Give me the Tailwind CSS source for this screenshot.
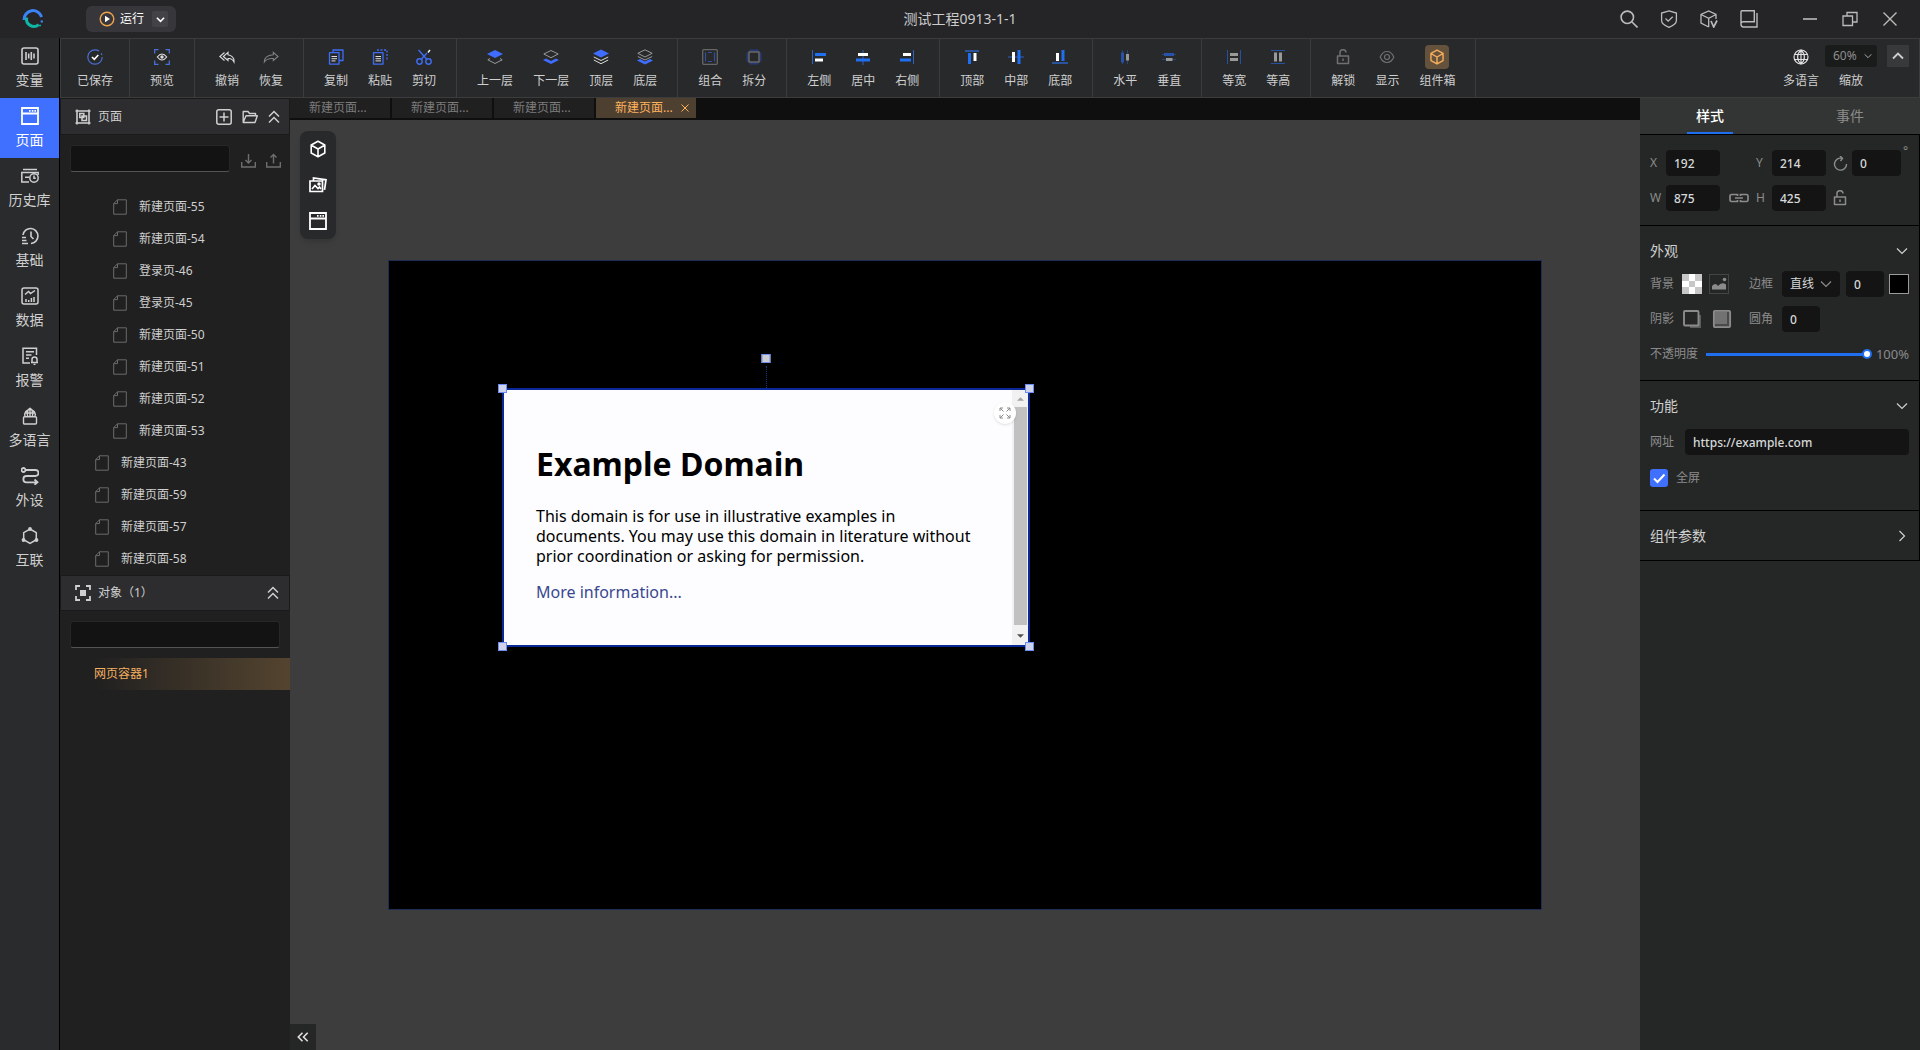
<!DOCTYPE html>
<html lang="zh-CN">
<head>
<meta charset="utf-8">
<meta name="viewport" content="width=device-width, initial-scale=1">
<title>测试工程0913-1-1</title>
<script src="https://cdn.jsdelivr.net/npm/@tailwindcss/browser@4"></script>
</head>
<body class="flex h-screen flex-col overflow-hidden bg-[#252528] font-['Noto_Sans','Noto_Sans_CJK_SC',sans-serif] text-[12px] leading-[18px] text-[#cfcfcf]">

<svg class="hidden" aria-hidden="true">
  <symbol id="file" viewBox="0 0 14 16"><path d="M4.5 .8h8.8v14.4H.7V4.6zM4.5 .8v3.8H.7" fill="none" stroke="currentColor"/></symbol>
  <symbol id="cube" viewBox="0 0 18 18"><path d="M9 1.2 15.8 5v8L9 16.8 2.2 13V5zM2.4 5.2 9 9l6.6-3.8M9 9v7.6" fill="none" stroke="currentColor" stroke-width="1.6" stroke-linejoin="round"/></symbol>
  <symbol id="window" viewBox="0 0 18 18"><path d="M1 1h16v16H1zM1 6.5h16" fill="none" stroke="currentColor" stroke-width="1.8"/><path d="M8 3.8h1.6M10.8 3.8h1.6M13.4 3.8H15" stroke="currentColor" stroke-width="1.8"/></symbol>
  <symbol id="down" viewBox="0 0 12 12"><path d="m1 3.5 5 5 5-5" fill="none" stroke="currentColor" stroke-width="1.2"/></symbol>
  <symbol id="dblup" viewBox="0 0 12 14"><path d="m1 6.5 5-5 5 5M1 12.5l5-5 5 5" fill="none" stroke="currentColor" stroke-width="1.5"/></symbol>
  <symbol id="lock" viewBox="0 0 14 16"><path d="M1.5 7h11v7.5h-11zM4 7V4a3 3 0 0 1 6-.5M7 9.5v2.5" fill="none" stroke="currentColor" stroke-width="1.5" stroke-linejoin="round"/></symbol>
</svg>

<header class="relative flex h-[38px] shrink-0 items-center">
  <svg class="ml-[22px] size-[22px]" viewBox="0 0 22 22" fill="none"><path d="M2 12A9 9 0 0 1 19.6 9" stroke="#3b82f6" stroke-width="3"/><path d="M4.7 9.5a7.4 7.4 0 0 0 12 7.2" stroke="#0fb5a5" stroke-width="3"/><circle cx="19.8" cy="13.5" r="1.2" fill="#3b82f6"/><circle cx="18" cy="17.4" r="1" fill="#0fb5a5"/></svg>
  <div class="ml-[42px] flex h-[26px] items-center rounded-md bg-[#37373b] pl-[13px] pr-2">
    <button class="flex items-center gap-[5px] text-white"><svg class="size-4" viewBox="0 0 16 16"><circle cx="8" cy="8" r="6.8" fill="none" stroke="#eda24e" stroke-width="1.4"/><path d="M6 4.8v6.4L11 8z" fill="#fff"/></svg>运行</button>
    <button class="ml-2 flex size-4 items-center justify-center rounded-[2px] bg-[#434347] text-white" aria-label="运行选项"><svg class="size-[9px]" viewBox="0 0 10 10"><path d="m1 3 4 4 4-4" fill="none" stroke="currentColor" stroke-width="1.8"/></svg></button>
  </div>
  <h1 class="absolute inset-x-0 mx-auto w-fit text-[14px] leading-5 text-[#cccccc]">测试工程0913-1-1</h1>
  <div class="ml-auto mr-[10px] flex items-center text-[#bbbbbb]">
    <button class="flex h-8 w-10 items-center justify-center" aria-label="搜索"><svg class="size-[18px]" viewBox="0 0 18 18" fill="none" stroke="currentColor" stroke-width="1.6"><circle cx="7.3" cy="7.3" r="6.2"/><path d="m12 12 5.5 5.5"/></svg></button>
    <button class="flex h-8 w-10 items-center justify-center" aria-label="安全"><svg class="size-[18px]" viewBox="0 0 18 18" fill="none" stroke="currentColor" stroke-width="1.3"><path d="M9 .9 16.4 3v7.5c0 3-4 5.5-7.4 6.8-3.4-1.3-7.4-3.8-7.4-6.8V3zM5.5 8.5l2.7 2.7 4.5-4.4"/></svg></button>
    <button class="flex h-8 w-10 items-center justify-center" aria-label="组件版本"><svg class="size-[18px]" viewBox="0 0 18 18" fill="none" stroke="currentColor" stroke-width="1.3"><path d="M16 9V4.5L8.7 1 1 4.5V13l7.7 4M1 4.5l7.7 3.8L16 4.5M8.700 8.300V17"/><path d="m11 11 2.700 6L17 10.500" stroke-width="1.700"/></svg></button>
    <button class="flex h-8 w-10 items-center justify-center" aria-label="文档"><svg class="size-[18px]" viewBox="0 0 18 18" fill="none" stroke="currentColor" stroke-width="1.4"><path d="M1 14.500V1.700q0-.9.900-.9h12.400v10.900H3.500Q1 11.700 1 14.300q0 2.700 2.500 2.700H17V3"/></svg></button>
    <button class="ml-[21px] flex h-8 w-10 items-center justify-center" aria-label="最小化"><svg class="size-4" viewBox="0 0 16 16"><path d="M1 8h14" stroke="currentColor" stroke-width="1.6"/></svg></button>
    <button class="flex h-8 w-10 items-center justify-center" aria-label="还原"><svg class="size-4" viewBox="0 0 16 16" fill="none" stroke="currentColor" stroke-width="1.3"><path d="M1 5h9.500v9.500H1zM5 5V1.500h10V11h-4.500"/></svg></button>
    <button class="flex h-8 w-10 items-center justify-center" aria-label="关闭"><svg class="size-4" viewBox="0 0 16 16" stroke="currentColor" stroke-width="1.4"><path d="m1.500 1.500 13 13M14.500 1.500l-13 13"/></svg></button>
  </div>
</header>

<div class="flex min-h-0 flex-1">
  <nav class="w-[60px] shrink-0 border-r border-black bg-[#2a2b2d] text-[14px] leading-5">
    <a href="#" class="flex h-[60px] flex-col items-center gap-[5px] pt-[9px]"><svg class="size-[18px]" viewBox="0 0 18 18" fill="none" stroke="currentColor" stroke-width="1.6"><rect x="1" y="1" width="16" height="16" rx="2"/><path d="M5 5v8M7.700 6.500v5M10.300 5v8M13 6.500v5"/></svg>变量</a>
    <a href="#" class="flex h-[60px] flex-col items-center gap-[5px] bg-[#4070ff] pt-[9px] text-white"><svg class="size-[18px]"><use href="#window"/></svg>页面</a>
    <a href="#" class="flex h-[60px] flex-col items-center gap-[5px] pt-[9px]"><svg class="size-[18px]" viewBox="0 0 18 18" fill="none" stroke="currentColor" stroke-width="1.5"><path d="M2 2.500h14M8 15H.8V5.500h16.400V8M4 10.300h4"/><circle cx="13" cy="11" r="4.200"/><path d="M13 8.500v2.800h1.800"/></svg>历史库</a>
    <a href="#" class="flex h-[60px] flex-col items-center gap-[5px] pt-[9px]"><svg class="size-[18px]" viewBox="0 0 18 18" fill="none" stroke="currentColor" stroke-width="1.6"><path d="M2 8A7.500 7.500 0 1 1 10 16.500M10 4.500v5l2.500 2.500M1 10.500h4M1 13.500h4.500M1 16.500h6"/></svg>基础</a>
    <a href="#" class="flex h-[60px] flex-col items-center gap-[5px] pt-[9px]"><svg class="size-[18px]" viewBox="0 0 18 18" fill="none" stroke="currentColor" stroke-width="1.5"><rect x="1" y="1" width="16" height="16" rx="2"/><path d="m4 7.500 3.500-3 2 2L14 3.500M5 15v-3M7.700 15v-2M10.400 15v-4M13 15v-5"/></svg>数据</a>
    <a href="#" class="flex h-[60px] flex-col items-center gap-[5px] pt-[9px]"><svg class="size-[18px]" viewBox="0 0 18 18" fill="none" stroke="currentColor" stroke-width="1.5"><path d="M9 16H2V1.200h13.500V8M5 4.800h8M5 8h5.500M5 11.200h3"/><path d="M11 15.500v-3a2.500 2.500 0 0 1 5 0v3zM10 15.600h7M12.500 17.400h2"/></svg>报警</a>
    <a href="#" class="flex h-[60px] flex-col items-center gap-[5px] pt-[9px]"><svg class="size-[18px]" viewBox="0 0 18 18" fill="none" stroke="currentColor" stroke-width="1.4"><path d="M4 9.500a5.300 5.300 0 1 1 10 0M9 1c-3 2.500-3 6-2.300 8.500M9 1c3 2.500 3 6 2.300 8.500M9 1v8.500M4 6h10"/><rect x="2.500" y="9.800" width="13" height="7.200" rx="1"/></svg>多语言</a>
    <a href="#" class="flex h-[60px] flex-col items-center gap-[5px] pt-[9px]"><svg class="size-[18px]" viewBox="0 0 18 18" fill="none" stroke="currentColor" stroke-width="1.8"><circle cx="2.500" cy="3" r="2"/><path d="M4.500 3h10a3 3 0 0 1 0 6h-9a3 3 0 0 0 0 6.300H16M13.500 12.500l3 2.800-3 2.500"/></svg>外设</a>
    <a href="#" class="flex h-[60px] flex-col items-center gap-[5px] pt-[9px]"><svg class="size-[18px]" viewBox="0 0 18 18" fill="none" stroke="currentColor" stroke-width="1.5"><path d="m9 2 6.300 3.700v7L9 16.300l-6.300-3.600v-7z"/><g fill="currentColor" stroke="none"><circle cx="9" cy="2" r="1.900"/><circle cx="2.500" cy="13" r="1.900"/><circle cx="15.500" cy="13" r="1.900"/></g></svg>互联</a>
  </nav>

  <div class="flex min-w-0 flex-1 flex-col">
    <div class="flex h-[60px] shrink-0 border border-[#3c3c3c] bg-[#28292b]" role="toolbar">
      <div class="flex border-r border-[#3c3c3c] px-[6px]">
        <button class="flex flex-col items-center gap-[3px] px-[10px] pt-[6px]"><span class="flex h-6 items-center"><svg class="size-4" viewBox="0 0 16 16" fill="none"><circle cx="8" cy="8" r="7.200" stroke="#4a70d8" stroke-width="1.200" stroke-dasharray="38 3 2 2"/><path d="m5 8 2.300 2.300L11.300 6" stroke="#fff" stroke-width="1.600"/></svg></span>已保存</button>
      </div>
      <div class="flex border-r border-[#3c3c3c] px-[10px]">
        <button class="flex flex-col items-center gap-[3px] px-[10px] pt-[6px]"><span class="flex h-6 items-center"><svg class="size-4" viewBox="0 0 16 16" fill="none"><path d="M.7 4.500V.7h3.800M11.500.7h3.800v3.800M15.300 11.500v3.800h-3.800M4.500 15.300H.7v-3.800" stroke="#4a70d8" stroke-width="1.300"/><path d="M3.300 8q4.700-6 9.400 0-4.700 6-9.400 0z" stroke="#ddd" stroke-width="1.200"/><circle cx="8" cy="8" r="1.700" fill="#ddd"/></svg></span>预览</button>
      </div>
      <div class="flex border-r border-[#3c3c3c] px-[10px]">
        <button class="flex flex-col items-center gap-[3px] px-[10px] pt-[6px]"><span class="flex h-6 items-center"><svg class="size-4" viewBox="0 0 16 16" fill="none" stroke="#ddd" stroke-width="1.100"><path d="M5.500 3.500.8 7.500l4.700 4M9 3.300 4.300 7.500 9 11.500V9.500q4-.5 6 3.500.5-6-6-7.300z"/></svg></span>撤销</button>
        <button class="flex flex-col items-center gap-[3px] px-[10px] pt-[6px]"><span class="flex h-6 items-center"><svg class="size-4" viewBox="0 0 16 16" fill="none" stroke="#808080" stroke-width="1.100"><path d="m10.300 3.300 4.700 4.200-4.700 4V9.500Q4 9 1.300 13 1 6.500 10.300 5.700z"/></svg></span>恢复</button>
      </div>
      <div class="flex border-r border-[#3c3c3c] px-[10px]">
        <button class="flex flex-col items-center gap-[3px] px-[10px] pt-[6px]"><span class="flex h-6 items-center"><svg class="size-4" viewBox="0 0 16 16" fill="none"><path d="M5 3.500V1h10v10.500h-3.500M1.500 3.700H11v11.500H1.500z" stroke="#3e6df5" stroke-width="1.300" stroke-linejoin="round"/><path d="M3.500 7.500H9M3.500 9.700H9M3.500 11.900h4" stroke="#ddd"/></svg></span>复制</button>
        <button class="flex flex-col items-center gap-[3px] px-[10px] pt-[6px]"><span class="flex h-6 items-center"><svg class="size-4" viewBox="0 0 16 16" fill="none"><path d="M5 1h10v10" stroke="#3e6df5" stroke-width="1.300" stroke-dasharray="2 1.500"/><path d="M1.500 3.700H11v11.500H1.500z" stroke="#3e6df5" stroke-width="1.300" stroke-linejoin="round"/><path d="M3.500 7.500H9M3.500 9.700H9M3.500 11.900H9" stroke="#ddd"/></svg></span>粘贴</button>
        <button class="flex flex-col items-center gap-[3px] px-[10px] pt-[6px]"><span class="flex h-6 items-center"><svg class="size-4" viewBox="0 0 16 16" fill="none" stroke="#3e6df5" stroke-width="1.400"><circle cx="3.500" cy="12.500" r="2.700"/><circle cx="12.500" cy="12.500" r="2.700"/><path d="m2.500 1 8.500 9.500M5 10.500 11 4"/><path d="m12 3.500 2-2.500" stroke="#fff"/></svg></span>剪切</button>
      </div>
      <div class="flex border-r border-[#3c3c3c] px-[10px]">
        <button class="flex flex-col items-center gap-[3px] px-[10px] pt-[6px]"><span class="flex h-6 items-center"><svg class="size-4" viewBox="0 0 16 16" fill="none"><path d="m3 9.500-2.200 1.300L8 14.500l7.200-3.700L13 9.500" stroke="#999"/><path d="m0 5 8-4 8 4-8 4z" fill="#3e6dff"/></svg></span>上一层</button>
        <button class="flex flex-col items-center gap-[3px] px-[10px] pt-[6px]"><span class="flex h-6 items-center"><svg class="size-4" viewBox="0 0 16 16" fill="none"><path d="m0 11 3-1.500L8 12l5-2.500 3 1.500-8 4z" fill="#3e6dff"/><path d="M.8 5 8 1.500 15.200 5 8 8.700z" stroke="#999"/></svg></span>下一层</button>
        <button class="flex flex-col items-center gap-[3px] px-[10px] pt-[6px]"><span class="flex h-6 items-center"><svg class="size-4" viewBox="0 0 16 16" fill="none"><path d="m.8 8 7.200 3.500L15.200 8M.8 11 8 14.700l7.200-3.700" stroke="#ddd"/><path d="m0 4.500 8-4 8 4-8 4z" fill="#3e6dff"/></svg></span>顶层</button>
        <button class="flex flex-col items-center gap-[3px] px-[10px] pt-[6px]"><span class="flex h-6 items-center"><svg class="size-4" viewBox="0 0 16 16" fill="none"><path d="m0 11.500 3-1.500 5 2.500 5-2.500 3 1.500-8 4z" fill="#3e6dff"/><path d="M.8 4.300 8 .8l7.200 3.500L8 8zM.8 7.500 8 11l7.200-3.500" stroke="#999"/></svg></span>底层</button>
      </div>
      <div class="flex border-r border-[#3c3c3c] px-[10px]">
        <button class="flex flex-col items-center gap-[3px] px-[10px] pt-[6px]"><span class="flex h-6 items-center"><svg class="size-4" viewBox="0 0 16 16" fill="none"><rect x=".7" y=".7" width="14.600" height="14.600" rx="1" stroke="#666" stroke-width="1.300"/><path d="M6 3.500h4M6 12.500h4M3.500 3.500v9M12.500 3.500v9" stroke="#31509f" stroke-width="1.200"/></svg></span>组合</button>
        <button class="flex flex-col items-center gap-[3px] px-[10px] pt-[6px]"><span class="flex h-6 items-center"><svg class="size-4" viewBox="0 0 16 16" fill="none"><path d="M3.500 1.500h9M3.500 14.500h9M1.500 3.500v9M14.500 3.500v9" stroke="#263a78" stroke-width="2"/><rect x="3" y="3" width="10" height="10" stroke="#777" stroke-width="1.200"/></svg></span>拆分</button>
      </div>
      <div class="flex border-r border-[#3c3c3c] px-[10px]">
        <button class="flex flex-col items-center gap-[3px] px-[10px] pt-[6px]"><span class="flex h-6 items-center"><svg class="size-4" viewBox="0 0 16 16"><path d="M1.500 1v14" stroke="#2b62c4"/><path d="M4 5.500h11" stroke="#1f6ff0" stroke-width="3"/><path d="M4 11h8" stroke="#fff" stroke-width="3"/></svg></span>左侧</button>
        <button class="flex flex-col items-center gap-[3px] px-[10px] pt-[6px]"><span class="flex h-6 items-center"><svg class="size-4" viewBox="0 0 16 16"><path d="M8 1v15" stroke="#2b62c4"/><path d="M3 5.500h10" stroke="#fff" stroke-width="3"/><path d="M1 11h14" stroke="#1f6ff0" stroke-width="3"/></svg></span>居中</button>
        <button class="flex flex-col items-center gap-[3px] px-[10px] pt-[6px]"><span class="flex h-6 items-center"><svg class="size-4" viewBox="0 0 16 16"><path d="M14.500 1v14" stroke="#2b62c4"/><path d="M4 5.500h8" stroke="#fff" stroke-width="3"/><path d="M1 11h11" stroke="#1f6ff0" stroke-width="3"/></svg></span>右侧</button>
      </div>
      <div class="flex border-r border-[#3c3c3c] px-[10px]">
        <button class="flex flex-col items-center gap-[3px] px-[10px] pt-[6px]"><span class="flex h-6 items-center"><svg class="size-4" viewBox="0 0 16 16"><path d="M1 2h14" stroke="#2b62c4" stroke-width="1.500"/><path d="M5.500 4v11" stroke="#1f6ff0" stroke-width="3"/><path d="M11 4v8" stroke="#fff" stroke-width="3"/></svg></span>顶部</button>
        <button class="flex flex-col items-center gap-[3px] px-[10px] pt-[6px]"><span class="flex h-6 items-center"><svg class="size-4" viewBox="0 0 16 16"><path d="M0 8h16" stroke="#2b62c4"/><path d="M5.500 3v10" stroke="#fff" stroke-width="3"/><path d="M11 1v14" stroke="#1f6ff0" stroke-width="3"/></svg></span>中部</button>
        <button class="flex flex-col items-center gap-[3px] px-[10px] pt-[6px]"><span class="flex h-6 items-center"><svg class="size-4" viewBox="0 0 16 16"><path d="M0 14h16" stroke="#2b62c4" stroke-width="1.500"/><path d="M5.500 4v8" stroke="#fff" stroke-width="3"/><path d="M11 1v11" stroke="#1f6ff0" stroke-width="3"/></svg></span>底部</button>
      </div>
      <div class="flex border-r border-[#3c3c3c] px-[10px]">
        <button class="flex flex-col items-center gap-[3px] px-[10px] pt-[6px]"><span class="flex h-6 items-center"><svg class="size-4" viewBox="0 0 16 16"><path d="M5.500 1v14M10.500 1v14" stroke="#2b4477"/><path d="M5.500 3.500v10" stroke="#2653a8" stroke-width="3"/><path d="M10.500 5v6.500" stroke="#999" stroke-width="3"/></svg></span>水平</button>
        <button class="flex flex-col items-center gap-[3px] px-[10px] pt-[6px]"><span class="flex h-6 items-center"><svg class="size-4" viewBox="0 0 16 16"><path d="M1 5.500h14M1 10.500h14" stroke="#2b4477"/><path d="M3 5.500h10" stroke="#2653a8" stroke-width="3"/><path d="M5 10.500h6.500" stroke="#999" stroke-width="3"/></svg></span>垂直</button>
      </div>
      <div class="flex border-r border-[#3c3c3c] px-[10px]">
        <button class="flex flex-col items-center gap-[3px] px-[10px] pt-[6px]"><span class="flex h-6 items-center"><svg class="size-4" viewBox="0 0 16 16"><path d="M1.500 1v14M14.500 1v14" stroke="#24509f"/><path d="M4 5.500h8M4 10.500h8" stroke="#999" stroke-width="3"/></svg></span>等宽</button>
        <button class="flex flex-col items-center gap-[3px] px-[10px] pt-[6px]"><span class="flex h-6 items-center"><svg class="size-4" viewBox="0 0 16 16"><path d="M1 1.500h14M1 14.500h14" stroke="#24509f"/><path d="M5.500 3.500v9M10.500 3.500v9" stroke="#999" stroke-width="3"/></svg></span>等高</button>
      </div>
      <div class="flex border-r border-[#3c3c3c] px-[10px]">
        <button class="flex flex-col items-center gap-[3px] px-[10px] pt-[6px]"><span class="flex h-6 items-center text-[#707070]"><svg class="h-4 w-[14px]"><use href="#lock"/></svg></span>解锁</button>
        <button class="flex flex-col items-center gap-[3px] px-[10px] pt-[6px]"><span class="flex h-6 items-center"><svg class="size-4" viewBox="0 0 16 16" fill="none" stroke="#707070" stroke-width="1.200"><path d="M1.200 8Q3.500 2.500 8 2.500T14.800 8Q12.500 13.500 8 13.500T1.200 8z"/><circle cx="8" cy="8" r="2.500"/></svg></span>显示</button>
        <button class="flex flex-col items-center gap-[3px] px-[10px] pt-[6px]"><span class="flex size-6 items-center justify-center rounded bg-[#65523c] text-[#f5ad5c]"><svg class="size-4"><use href="#cube"/></svg></span>组件箱</button>
      </div>
      <div class="ml-auto flex items-start pr-[10px] pt-[6px]">
        <button class="flex flex-col items-center gap-[3px]"><span class="flex h-6 items-center"><svg class="size-4" viewBox="0 0 16 16" fill="none" stroke="#e0e0e0" stroke-width="1.200"><circle cx="8" cy="8" r="7"/><path d="M8 1v14M1.700 5.500h12.600M1.700 10.500h12.600M8 1c-4.500 4-4.500 10 0 14M8 1c4.500 4 4.500 10 0 14"/></svg></span>多语言</button>
        <div class="ml-[6px] flex flex-col items-center gap-[5px]">
          <div class="relative flex w-[52px] items-center"><select id="zoom" class="h-[22px] w-full appearance-none rounded-[3px] bg-[#1a1b1b] pl-2 text-[12px] text-[#8e8e8e]"><option>60%</option></select><svg class="pointer-events-none absolute right-[5px] size-2"><use href="#down"/></svg></div>
          <label for="zoom">缩放</label>
        </div>
        <button class="ml-[10px] flex size-[22px] items-center justify-center bg-[#38393a]" aria-label="收起"><svg class="size-3" viewBox="0 0 12 12"><path d="m1 8.500 5-5 5 5" fill="none" stroke="currentColor" stroke-width="1.800"/></svg></button>
      </div>
    </div>

    <div class="flex min-h-0 flex-1">
      <aside class="w-[230px] shrink-0 bg-[#202020]">
        <div class="flex h-[37px] items-center border border-[#1a1a1a] bg-[#2d2d2f] pl-[14px] pr-[9px]">
          <svg class="size-4" viewBox="0 0 16 16" fill="none" stroke="currentColor"><path d="M2 .5v15M14 .5v15M.5 2h15M.5 14h15" stroke-width="1.600"/><path d="M4.800 4.500h4v4h-4zM7 7h4.500v4.500H7z" stroke-width="1.500"/></svg>
          <h2 class="ml-[7px]">页面</h2>
          <button class="ml-auto" aria-label="新建页面"><svg class="size-4" viewBox="0 0 16 16" fill="none" stroke="currentColor" stroke-width="1.500"><rect x=".8" y=".8" width="14.400" height="14.400" rx="2"/><path d="M8 3.500v9M3.500 8h9"/></svg></button>
          <button class="ml-[10px]" aria-label="新建文件夹"><svg class="size-4" viewBox="0 0 16 16" fill="none" stroke="currentColor" stroke-width="1.400" stroke-linejoin="round"><path d="M1.200 13.500V2.500h4.800l1.500 2h6v2.300M1.200 13.500 4 6.800h11.300l-2.300 6.700z"/></svg></button>
          <button class="ml-[10px]" aria-label="全部折叠"><svg class="h-[14px] w-3"><use href="#dblup"/></svg></button>
        </div>
        <div class="flex h-14 items-start pl-[10px] pt-[10px]">
          <input type="text" aria-label="搜索页面" class="h-[27px] w-[160px] rounded-[3px] border border-[#272727] border-b-[#545454] bg-[#131313] px-2 outline-none">
          <button class="ml-[11px] mt-2 text-[#6e6e6e]" aria-label="导入"><svg class="size-[15px]" viewBox="0 0 15 15" fill="none" stroke="currentColor" stroke-width="1.400"><path d="M.7 9v5h13.600V9M7.500 1v9M4.500 7l3 3 3-3"/></svg></button>
          <button class="ml-[10px] mt-2 text-[#6e6e6e]" aria-label="导出"><svg class="size-[15px]" viewBox="0 0 15 15" fill="none" stroke="currentColor" stroke-width="1.400"><path d="M.7 9v5h13.600V9M7.500 10.500V1.500M4.500 4.500l3-3 3 3"/></svg></button>
        </div>
        <ul class="[&_a]:flex [&_a]:h-8 [&_a]:items-center [&_a]:gap-3 [&_svg]:h-4 [&_svg]:w-[14px] [&_svg]:text-[#6a6a6a]">
          <li><a href="#" class="pl-[53px]"><svg><use href="#file"/></svg>新建页面-55</a></li>
          <li><a href="#" class="pl-[53px]"><svg><use href="#file"/></svg>新建页面-54</a></li>
          <li><a href="#" class="pl-[53px]"><svg><use href="#file"/></svg>登录页-46</a></li>
          <li><a href="#" class="pl-[53px]"><svg><use href="#file"/></svg>登录页-45</a></li>
          <li><a href="#" class="pl-[53px]"><svg><use href="#file"/></svg>新建页面-50</a></li>
          <li><a href="#" class="pl-[53px]"><svg><use href="#file"/></svg>新建页面-51</a></li>
          <li><a href="#" class="pl-[53px]"><svg><use href="#file"/></svg>新建页面-52</a></li>
          <li><a href="#" class="pl-[53px]"><svg><use href="#file"/></svg>新建页面-53</a></li>
          <li><a href="#" class="pl-[35px]"><svg><use href="#file"/></svg>新建页面-43</a></li>
          <li><a href="#" class="pl-[35px]"><svg><use href="#file"/></svg>新建页面-59</a></li>
          <li><a href="#" class="pl-[35px]"><svg><use href="#file"/></svg>新建页面-57</a></li>
          <li><a href="#" class="pl-[35px]"><svg><use href="#file"/></svg>新建页面-58</a></li>
        </ul>
        <div class="flex h-9 items-center border border-[#1a1a1a] bg-[#2d2d2f] pl-[14px] pr-[10px]">
          <svg class="size-4" viewBox="0 0 16 16" fill="none" stroke="currentColor" stroke-width="1.800"><path d="M1 5V1h4M11 1h4v4M15 11v4h-4M5 15H1v-4"/><path d="M5 5h6v6H5z" fill="currentColor" stroke="none"/></svg>
          <h2 class="ml-[7px]">对象（1）</h2>
          <button class="ml-auto" aria-label="折叠对象"><svg class="h-[14px] w-3"><use href="#dblup"/></svg></button>
        </div>
        <div class="p-[10px]"><input type="text" aria-label="搜索对象" class="block h-[27px] w-full rounded-[3px] border border-[#272727] border-b-[#545454] bg-[#131313] px-2 outline-none"></div>
        <a href="#" class="flex h-8 items-center bg-linear-to-r from-transparent from-15% to-[#54442f] pl-[34px] text-[#f5b060]">网页容器1</a>
      </aside>

      <main class="flex min-w-0 flex-1 flex-col">
        <div class="flex h-[22px] shrink-0 items-start gap-[2px] bg-[#0f0f0f] text-[#7c7c7c]">
          <button class="h-5 w-[100px] bg-[#202020] pl-[19px] text-left">新建页面...</button>
          <button class="h-5 w-[100px] bg-[#202020] pl-[19px] text-left">新建页面...</button>
          <button class="h-5 w-[100px] bg-[#202020] pl-[19px] text-left">新建页面...</button>
          <button class="flex h-5 w-[100px] items-center gap-2 bg-[#4d4031] pl-[19px] text-left text-[#ffb25c]"><span>新建页面...</span><svg class="size-2" viewBox="0 0 8 8" stroke="currentColor"><path d="m.5.5 7 7M7.500.5l-7 7"/></svg></button>
        </div>
        <div class="relative min-h-0 flex-1 overflow-hidden bg-[#3d3d3d]">
          <div class="absolute left-[10px] top-[11px] flex w-9 flex-col items-center gap-[18px] rounded-lg bg-[#28292b] py-[9px] text-white shadow-md">
            <button aria-label="组件"><svg class="size-[18px]"><use href="#cube"/></svg></button>
            <button aria-label="图库"><svg class="size-[18px]" viewBox="0 0 18 18" fill="none" stroke="currentColor" stroke-width="1.700"><path d="M1 5h12.500v10.500H1zM4.500 4.500V2L17 3.800l-1.500 10"/><path d="m3 13 3-3.500 3 3 1.500-1.500 1.500 2"/><circle cx="10" cy="8" r=".9"/></svg></button>
            <button aria-label="窗口"><svg class="size-[18px]"><use href="#window"/></svg></button>
          </div>

          <div class="absolute left-[98px] top-[140px] h-[650px] w-[1154px] border border-[#1f2d55] bg-black">
            <div class="absolute left-[113px] top-[127px] h-[259px] w-[528px] border-2 border-[#0a2896] bg-[#fdfdff]">
              <div class="absolute -top-6 left-1/2 h-[22px] border-l border-dotted border-[#1d3580]"></div>
              <div class="absolute -top-[36px] left-1/2 size-[9px] -translate-x-1/2 border border-[#6c8df5] bg-[#cdcdd0]"></div>
              <div class="flex h-full font-['Noto_Sans',sans-serif] text-black">
                <article class="min-w-0 flex-1 pl-8 pr-3 pt-[54px] text-[16px] leading-5">
                  <h2 class="text-[32px] font-bold leading-[40px]">Example Domain</h2>
                  <p class="mt-[22px]">This domain is for use in illustrative examples in<br>documents. You may use this domain in literature without<br>prior coordination or asking for permission.</p>
                  <a href="https://example.com" class="mt-4 inline-block text-[#38488f]">More information...</a>
                </article>
                <div class="flex w-4 flex-col items-center justify-between bg-[#f1f1f1] py-[7px]">
                  <svg class="h-1 w-[7px]" viewBox="0 0 8 4"><path d="m0 4 4-4 4 4z" fill="#a3a3a3"/></svg>
                  <div class="mb-[9px] mt-[6px] w-[13px] flex-1 bg-[#c1c1c1]"></div>
                  <svg class="h-1 w-[7px]" viewBox="0 0 8 4"><path d="m0 0 4 4 4-4z" fill="#505050"/></svg>
                </div>
              </div>
              <button class="absolute right-3 top-[12px] flex size-[22px] items-center justify-center rounded-full bg-white shadow" aria-label="全屏"><svg class="size-3" viewBox="0 0 12 12" fill="none" stroke="#8c8c8c"><path d="M1 4V1h3M8 1h3v3M11 8v3H8M4 11H1V8M1 1l3.500 3.500M11 1 7.500 4.500M11 11 7.500 7.500M1 11l3.500-3.500"/></svg></button>
              <div class="absolute -left-[6px] -top-[6px] size-[9px] border border-[#6c8df5] bg-[#cfd4ea]"></div>
              <div class="absolute -right-[6px] -top-[6px] size-[9px] border border-[#6c8df5] bg-[#cfd4ea]"></div>
              <div class="absolute -bottom-[6px] -left-[6px] size-[9px] border border-[#6c8df5] bg-[#cfd4ea]"></div>
              <div class="absolute -bottom-[6px] -right-[6px] size-[9px] border border-[#6c8df5] bg-[#cfd4ea]"></div>
            </div>
          </div>

          <button class="absolute bottom-0 left-0 flex size-[26px] items-center justify-center bg-[#252727] text-[#e0e0e0]" aria-label="收起面板"><svg class="h-[10px] w-3" viewBox="0 0 12 10"><path d="M5.500.8 1.300 5l4.200 4.200M10.700.8 6.500 5l4.200 4.200" fill="none" stroke="currentColor" stroke-width="1.600"/></svg></button>
        </div>
      </main>

      <aside class="w-[280px] shrink-0 bg-[#252727] text-[#8b8b8b]">
        <div class="grid h-9 grid-cols-2 bg-[#333534] text-[14px]" role="tablist">
          <button role="tab" aria-selected="true" class="flex justify-center font-medium text-white"><span class="h-9 border-b-2 border-[#1f6ff0] px-[9px] leading-9">样式</span></button>
          <button role="tab" aria-selected="false">事件</button>
        </div>
        <div class="border-r border-black [&_input]:font-medium">
          <section class="border-y border-black pb-[14px] pl-[10px] pt-[15px]">
            <div class="flex h-[26px] items-center">
              <label for="px" class="w-4">X</label><input id="px" value="192" class="h-[26px] w-[54px] rounded bg-[#141414] px-2 text-[#d5d9d9] outline-none">
              <label for="py" class="ml-9 w-4">Y</label><input id="py" value="214" class="h-[26px] w-[54px] rounded bg-[#141414] px-2 text-[#d5d9d9] outline-none">
              <svg class="ml-[7px] size-[15px]" viewBox="0 0 15 15" fill="none" stroke="currentColor" stroke-width="1.400"><path d="M13.500 8A6 6 0 1 1 9 2.300M7 0l2.500 2.300L7.500 5"/></svg>
              <input aria-label="旋转角度" value="0" class="ml-1 h-[26px] w-[49px] rounded bg-[#141414] px-2 text-[#d5d9d9] outline-none"><span class="-mt-2 ml-[2px] self-start">°</span>
            </div>
            <div class="mt-[9px] flex h-[26px] items-center">
              <label for="pw" class="w-4">W</label><input id="pw" value="875" class="h-[26px] w-[54px] rounded bg-[#141414] px-2 text-[#d5d9d9] outline-none">
              <svg class="ml-[9px] h-[10px] w-5" viewBox="0 0 20 10" fill="none" stroke="currentColor" stroke-width="1.700"><path d="M8.500 3V1.500h-6Q1 1.500 1 3v4q0 1.500 1.500 1.500h6V7M11.500 3V1.500h6Q19 1.500 19 3v4q0 1.500-1.500 1.500h-6V7M6 5h8"/></svg>
              <label for="ph" class="ml-[7px] w-4">H</label><input id="ph" value="425" class="h-[26px] w-[54px] rounded bg-[#141414] px-2 text-[#d5d9d9] outline-none">
              <svg class="ml-[7px] h-4 w-[14px]"><use href="#lock"/></svg>
            </div>
          </section>

          <section class="border-b border-black px-[10px] pb-4 pt-[15px]">
            <div class="flex h-5 items-center justify-between text-[14px] text-[#cfcfcf]"><h3>外观</h3><svg class="mr-[1px] size-3"><use href="#down"/></svg></div>
            <div class="mt-[10px] flex h-[26px] items-center">
              <span class="w-8">背景</span>
              <svg class="size-5" viewBox="0 0 20 20"><rect width="20" height="20" fill="#fff"/><path d="M0 0h7v7H0zM13 0h7v7h-7zM7 7h6v6H7zM0 13h7v7H0zM13 13h7v7h-7z" fill="#c8c8c8"/></svg>
              <svg class="ml-[7px] size-5" viewBox="0 0 20 20"><rect x=".5" y=".5" width="19" height="19" fill="none" stroke="#444"/><path d="M3 15.500V12q3.500-4 6 0 3.500-4.500 8-1.500v5z" fill="currentColor"/><circle cx="15.500" cy="5.500" r="1.800" fill="currentColor"/></svg>
              <label for="bs" class="ml-5 w-[33px]">边框</label>
              <div class="relative flex w-[58px] items-center"><select id="bs" class="h-[26px] w-full appearance-none rounded bg-[#141414] pl-2 text-[12px] text-[#d5d9d9]"><option>直线</option></select><svg class="pointer-events-none absolute right-2 size-3"><use href="#down"/></svg></div>
              <input aria-label="边框宽度" value="0" class="ml-[6px] h-[26px] w-[38px] rounded bg-[#141414] px-2 text-[#d5d9d9] outline-none">
              <button aria-label="边框颜色" class="ml-[5px] size-5 border border-[#9a9a9a] bg-black"></button>
            </div>
            <div class="mt-[9px] flex h-[26px] items-center">
              <span class="w-8">阴影</span>
              <svg class="size-5" viewBox="0 0 20 20" fill="none"><path d="M8 18h10V6" stroke="#5c5c5c" stroke-width="2"/><rect x="2" y="2" width="14.500" height="14.500" rx="1" stroke="currentColor" stroke-width="1.900"/></svg>
              <svg class="ml-[10px] size-5" viewBox="0 0 20 20" fill="none"><rect x="1.900" y="1.900" width="16.200" height="16.200" rx="1" fill="#4a4a4a" stroke="currentColor" stroke-width="1.900"/><path d="M3 3h12v12H3z" fill="#727272"/></svg>
              <label for="rd" class="ml-[17px] w-[33px]">圆角</label>
              <input id="rd" value="0" class="h-[26px] w-[38px] rounded bg-[#141414] px-2 text-[#d5d9d9] outline-none">
            </div>
            <div class="mt-3 flex h-5 items-center">
              <label for="op" class="w-14">不透明度</label>
              <div class="relative flex w-[166px] items-center">
                <input id="op" type="range" value="100" class="absolute inset-0 h-full w-full opacity-0">
                <div class="h-[3px] flex-1 bg-[#1f6ff0]"></div><div class="-ml-2 size-[10px] rounded-full border-2 border-[#1f6ff0] bg-white"></div>
              </div>
              <span class="ml-auto text-[13px] leading-5">100%</span>
            </div>
          </section>

          <section class="border-b border-black px-[10px] pb-[23px] pt-[15px]">
            <div class="flex h-5 items-center justify-between text-[14px] text-[#cfcfcf]"><h3>功能</h3><svg class="mr-[1px] size-3"><use href="#down"/></svg></div>
            <div class="mt-[13px] flex items-center"><label for="url" class="w-[35px]">网址</label><input id="url" value="https://example.com" class="h-[26px] min-w-0 flex-1 rounded bg-[#141414] px-2 text-[#d5d9d9] outline-none"></div>
            <div class="mt-[14px] flex items-center gap-2">
              <span class="relative flex size-[18px]"><input id="fs" type="checkbox" checked class="size-[18px] appearance-none rounded-[3px] bg-[#4070ff]"><svg class="pointer-events-none absolute inset-0 size-[18px]" viewBox="0 0 18 18"><path d="m4 9.500 3.500 3.500L14.500 5.500" fill="none" stroke="#fff" stroke-width="2"/></svg></span>
              <label for="fs">全屏</label>
            </div>
          </section>

          <section class="flex h-[50px] items-center justify-between border-b border-black px-[10px] text-[14px] text-[#cfcfcf]"><h3>组件参数</h3><svg class="mr-[1px] size-3 -rotate-90"><use href="#down"/></svg></section>
        </div>
      </aside>
    </div>
  </div>
</div>
</body>
</html>
